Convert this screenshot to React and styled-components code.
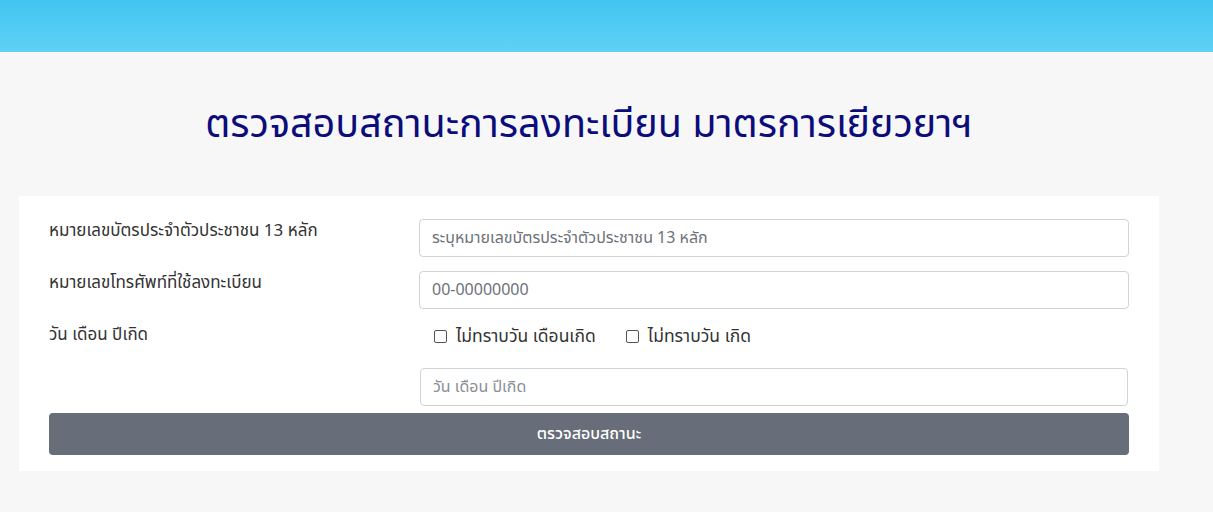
import React from 'react';
import styled, { createGlobalStyle } from 'styled-components';

const GlobalStyle = createGlobalStyle`
  html, body {
    margin: 0;
    padding: 0;
    background: #f7f7f7;
    font-family: "Noto Sans Thai", "Noto Sans", "Open Sans", sans-serif;
  }
`;

const TopBar = styled.header`
  height: 52px;
  background: linear-gradient(180deg, #42c5f1 0%, #5fd1f5 100%);
`;

const Container = styled.main`
  width: 1140px;
  margin-left: 19px;
`;

const Title = styled.h1`
  margin: 0;
  height: 144px;
  display: flex;
  align-items: center;
  justify-content: center;
  padding-top: 2px;
  box-sizing: border-box;
  font-size: 39.5px;
  font-weight: 400;
  color: #0c0c7a;
`;

const Card = styled.section`
  background: #fff;
  padding: 23px 30px 16px;
  display: flex;
  flex-direction: column;
`;

const Row = styled.div`
  display: grid;
  grid-template-columns: 370px 710px;
  align-items: start;
  margin-bottom: ${(p) => p.gap || 14}px;
`;

const Label = styled.label`
  font-size: 17px;
  color: #333;
  line-height: 22px;
  padding-top: ${(p) => p.top || 1}px;
`;

const Input = styled.input`
  box-sizing: border-box;
  width: ${(p) => (p.narrow ? '708px' : '710px')};
  margin-left: ${(p) => (p.narrow ? '1px' : '0')};
  height: 38px;
  padding: 0 12px;
  border: 1px solid #ced4da;
  border-radius: 4px;
  font-family: inherit;
  font-size: 16px;
  color: #495057;
  background: #fff;

  &::placeholder {
    color: ${(p) => (p.dim ? '#8a8f95' : '#6c727a')};
  }
`;

const CheckGroup = styled.div`
  display: flex;
  align-items: center;
  gap: 30px;
  padding-left: 15px;
  height: 26px;
`;

const CheckItem = styled.label`
  display: flex;
  align-items: center;
  gap: 9px;
  font-size: 17.5px;
  color: #333;
`;

const Box = styled.span`
  width: 11px;
  height: 11px;
  border: 1.6px solid #555;
  border-radius: 2px;
  background: #fff;
`;

const Button = styled.button`
  height: 42px;
  border: none;
  border-radius: 4px;
  background: #676d79;
  color: #fff;
  font-family: inherit;
  font-size: 16px;
  font-weight: 500;
  cursor: pointer;
`;

export default function App() {
  return (
    <>
      <GlobalStyle />
      <TopBar />
      <Container>
        <Title>ตรวจสอบสถานะการลงทะเบียน มาตรการเยียวยาฯ</Title>
        <Card>
          <Row>
            <Label>หมายเลขบัตรประจำตัวประชาชน 13 หลัก</Label>
            <Input placeholder="ระบุหมายเลขบัตรประจำตัวประชาชน 13 หลัก" />
          </Row>
          <Row>
            <Label>หมายเลขโทรศัพท์ที่ใช้ลงทะเบียน</Label>
            <Input placeholder="00-00000000" />
          </Row>
          <Row gap={19}>
            <Label top={1}>วัน เดือน ปีเกิด</Label>
            <CheckGroup>
              <CheckItem>
                <Box />
                ไม่ทราบวัน เดือนเกิด
              </CheckItem>
              <CheckItem>
                <Box />
                ไม่ทราบวัน เกิด
              </CheckItem>
            </CheckGroup>
          </Row>
          <Row gap={7}>
            <span />
            <Input narrow dim placeholder="วัน เดือน ปีเกิด" />
          </Row>
          <Button>ตรวจสอบสถานะ</Button>
        </Card>
      </Container>
    </>
  );
}
